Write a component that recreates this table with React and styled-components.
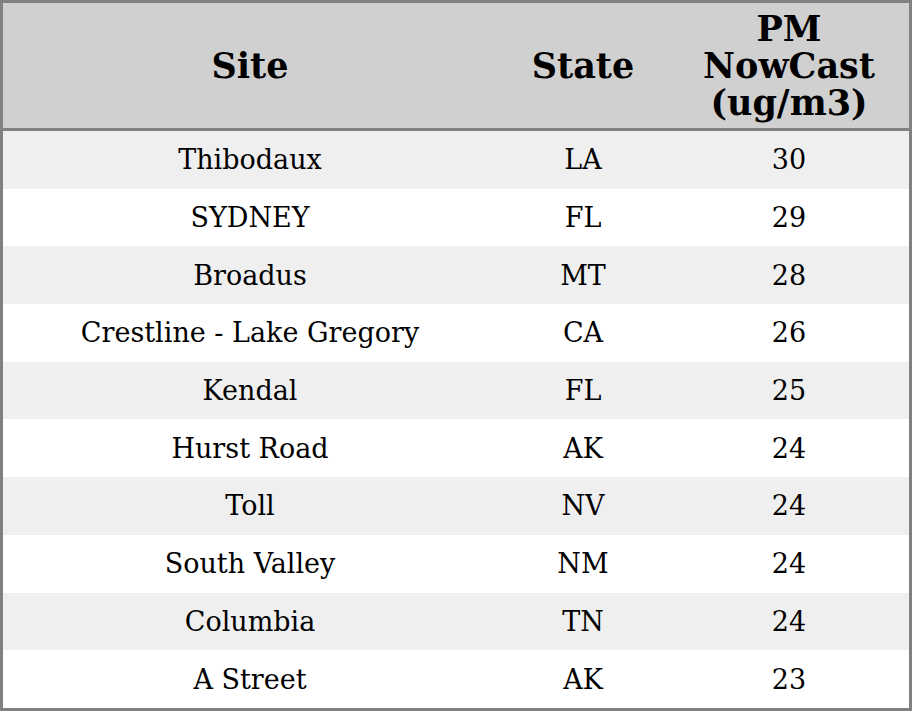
import React from 'react';
import styled, { createGlobalStyle } from 'styled-components';

const GlobalStyle = createGlobalStyle`
  html, body {
    margin: 0;
    padding: 0;
    background: #fff;
  }
  body {
    font-family: "DejaVu Serif", "Liberation Serif", serif;
  }
`;

const Frame = styled.div`
  box-sizing: border-box;
  width: 912px;
  height: 711px;
  border: 3px solid #808080;
`;

const Table = styled.table`
  width: 100%;
  height: 100%;
  border-collapse: separate;
  border-spacing: 0;
  font-family: "DejaVu Serif", "Liberation Serif", serif;
  color: #000;
  table-layout: fixed;
`;

const HeadRow = styled.tr`
  background: #d0d0d0;
  height: 128px;
`;

const HeadCell = styled.th`
  box-sizing: border-box;
  width: ${p => p.$w}px;
  padding: 0 4px;
  border-bottom: 3px solid #808080;
  font-size: 35px;
  font-weight: bold;
  line-height: 37px;
  text-align: center;
  vertical-align: middle;
`;

const Row = styled.tr`
  background: ${p => (p.$odd ? '#efefef' : '#fff')};
  height: 57.6px;
`;

const Cell = styled.td`
  padding: 0;
  font-size: 27px;
  text-align: center;
  vertical-align: middle;
`;

const rows = [
  ['Thibodaux', 'LA', 30],
  ['SYDNEY', 'FL', 29],
  ['Broadus', 'MT', 28],
  ['Crestline - Lake Gregory', 'CA', 26],
  ['Kendal', 'FL', 25],
  ['Hurst Road', 'AK', 24],
  ['Toll', 'NV', 24],
  ['South Valley', 'NM', 24],
  ['Columbia', 'TN', 24],
  ['A Street', 'AK', 23]
];

const App = () => {
  return (
    <>
      <GlobalStyle />
      <Frame>
        <Table>
          <thead>
            <HeadRow>
              <HeadCell $w={494}>Site</HeadCell>
              <HeadCell $w={172}>State</HeadCell>
              <HeadCell $w={240}>
                PM
                <br />
                NowCast
                <br />
                (ug/m3)
              </HeadCell>
            </HeadRow>
          </thead>
          <tbody>
            {rows.map(([site, state, value], i) => (
              <Row key={site} $odd={i % 2 === 0}>
                <Cell>{site}</Cell>
                <Cell>{state}</Cell>
                <Cell>{value}</Cell>
              </Row>
            ))}
          </tbody>
        </Table>
      </Frame>
    </>
  );
};

export default App;
